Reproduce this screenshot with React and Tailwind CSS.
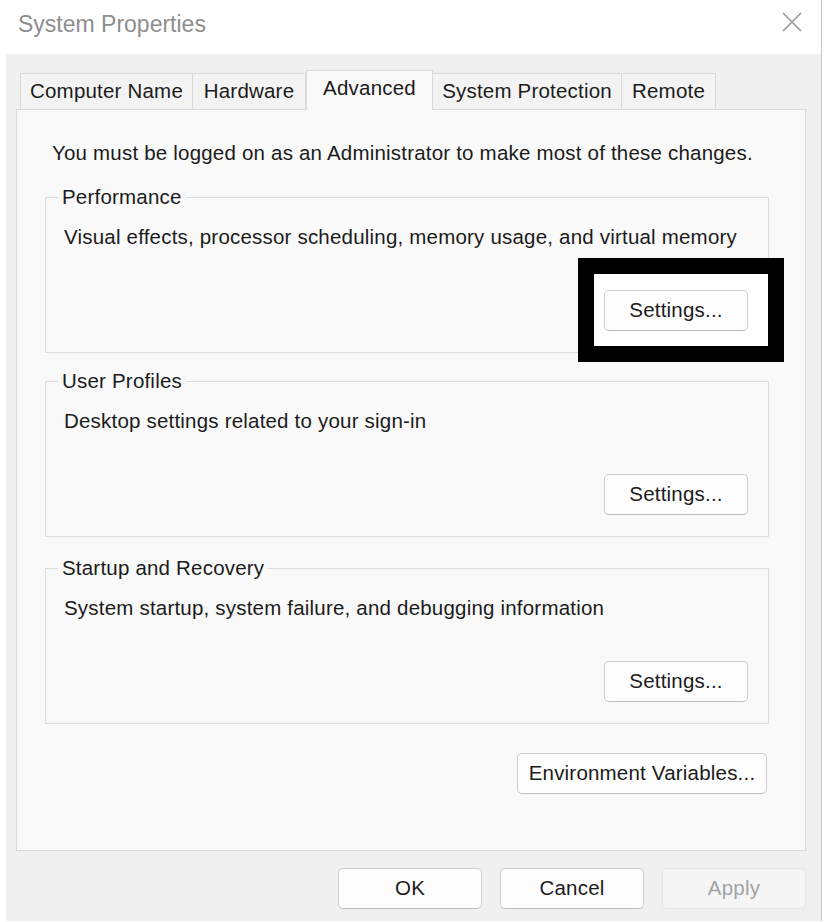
import React from "react";

const tabs = [
  { label: "Computer Name", width: "w-[173px]" },
  { label: "Hardware", width: "w-[114px]" },
  { label: "Advanced", width: "w-[127px]", active: true },
  { label: "System Protection", width: "w-[190px]" },
  { label: "Remote", width: "w-[95px]" },
];

const WinButton = ({ children, className = "", disabled = false }) => (
  <button
    type="button"
    disabled={disabled}
    className={
      "relative h-[41px] rounded-[5px] border text-[20.5px] leading-none tracking-[0.2px] " +
      (disabled
        ? "border-[#e6e6e6] bg-[#f5f5f5] text-[#a3a3a3] "
        : "border-[#cfcfcf] border-b-[#bdbdbd] bg-[#fdfdfd] text-[#1b1b1b] ") +
      className
    }
  >
    {children}
  </button>
);

const GroupBox = ({ title, description, highlight = false, className = "" }) => (
  <fieldset
    className={
      "ml-[28px] w-[724px] border border-[#dcdcdc] pl-[12px] pr-[20px] pb-[21px] " + className
    }
  >
    <legend className="px-[4px] leading-[24px] text-[#1b1b1b]">{title}</legend>
    <p className="ml-[6px] mt-[16px] leading-[24px] text-[#1b1b1b]">{description}</p>
    <div className="mt-[41px] flex justify-end">
      <div className="relative">
        {highlight && (
          <span className="absolute -left-[26px] -top-[32px] -right-[36px] -bottom-[31px] border-[16px] border-black bg-white" />
        )}
        <WinButton className="w-[144px]">Settings...</WinButton>
      </div>
    </div>
  </fieldset>
);

export default function App() {
  return (
    <div className="min-h-screen bg-white font-['Liberation_Sans',Arial,sans-serif] text-[20.5px] tracking-[0.2px]">
      <div className="ml-[6px] flex h-[921px] w-[816px] flex-col border-r border-[#c4c4c4]">
        {/* Title bar */}
        <div className="flex h-[54px] items-center justify-between bg-white pb-[6px] pl-[12px] pr-[18px]">
          <span className="text-[23px] tracking-normal text-[#8e8e8e]">System Properties</span>
          <svg width="22" height="22" viewBox="0 0 22 22" className="mb-[4px]">
            <path d="M2 2 L20 20 M20 2 L2 20" stroke="#8f8f8f" strokeWidth="1.4" fill="none" />
          </svg>
        </div>

        {/* Body */}
        <div className="flex-1 bg-[#f0f0f0] pl-[10px] pt-[16px]">
          <div className="flex h-[39px] items-end pl-[4px]">
            {tabs.map((tab) =>
              tab.active ? (
                <div
                  key={tab.label}
                  className={
                    tab.width +
                    " relative z-10 -mb-px flex h-[40px] items-center justify-center border border-b-0 border-[#d9d9d9] bg-[#f9f9f9] pb-[5px] text-[#1b1b1b]"
                  }
                >
                  {tab.label}
                </div>
              ) : (
                <div
                  key={tab.label}
                  className={
                    tab.width +
                    " -ml-px flex h-[36px] items-center justify-center border border-b-0 border-[#dadada] bg-[#f3f3f3] text-[#1b1b1b] first:ml-0"
                  }
                >
                  {tab.label}
                </div>
              )
            )}
          </div>

          <div className="h-[742px] w-[790px] border border-[#d9d9d9] bg-[#f9f9f9] pt-[31px]">
            <p className="pl-[35px] leading-[24px] text-[#1b1b1b]">
              You must be logged on as an Administrator to make most of these changes.
            </p>

            <GroupBox
              className="mt-[20px]"
              title="Performance"
              description="Visual effects, processor scheduling, memory usage, and virtual memory"
              highlight
            />
            <GroupBox
              className="mt-[16px]"
              title="User Profiles"
              description="Desktop settings related to your sign-in"
            />
            <GroupBox
              className="mt-[19px]"
              title="Startup and Recovery"
              description="System startup, system failure, and debugging information"
            />

            <div className="ml-[28px] mt-[29px] flex w-[724px] justify-end pr-[2px]">
              <WinButton className="w-[250px]">Environment Variables...</WinButton>
            </div>
          </div>

          <div className="mt-[17px] flex w-[790px] justify-end gap-[18px]">
            <WinButton className="w-[144px]">OK</WinButton>
            <WinButton className="w-[144px]">Cancel</WinButton>
            <WinButton className="w-[144px]" disabled>
              Apply
            </WinButton>
          </div>
        </div>
      </div>
    </div>
  );
}
